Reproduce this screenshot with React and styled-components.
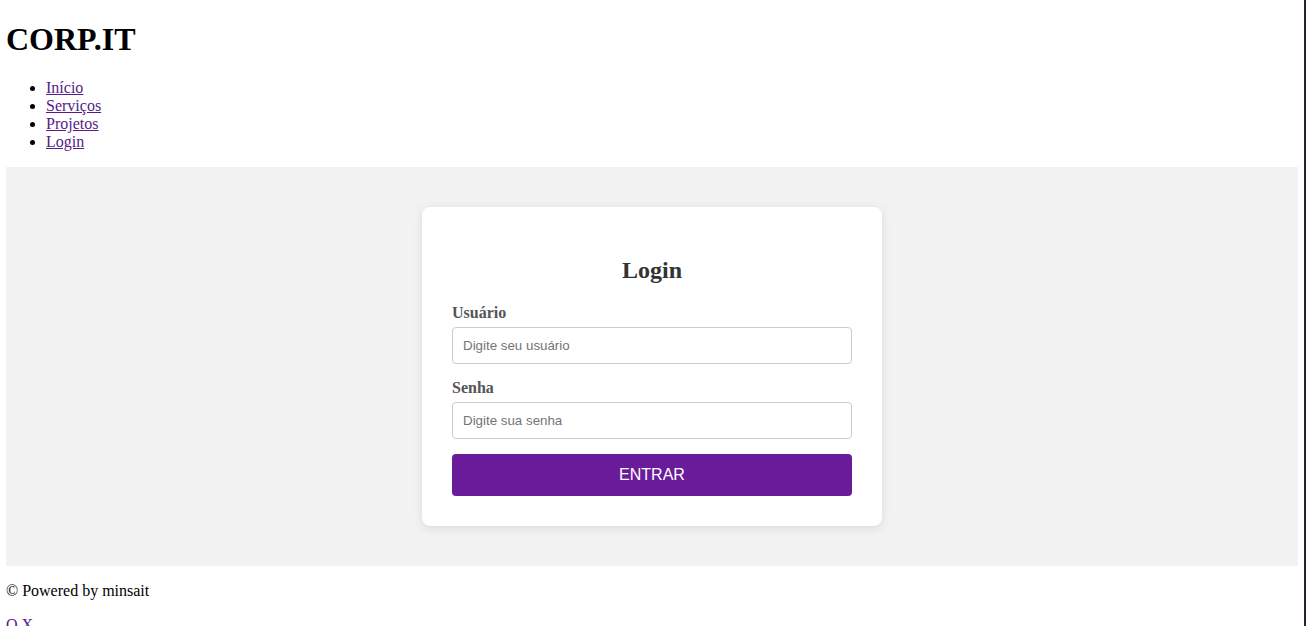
import React from 'react'
import styled, { createGlobalStyle } from 'styled-components'

const GlobalStyle = createGlobalStyle`
  html {
    border-right: 2px solid #1f2630;
    background: #fff;
  }
  body {
    margin: 0 6px 0 6px;
    font-family: "Liberation Serif", "Times New Roman", serif;
    font-size: 16px;
    color: #000;
  }
`

const Header = styled.header`
  h1 {
    font-size: 32px;
    margin: 20.5px 0 21.44px;
  }
`

const Nav = styled.ul`
  margin: 0 0 16px;
  padding-left: 40px;
  li {
    line-height: 18px;
  }
`

const Link = styled.a`
  color: #551a8b;
  text-decoration: underline;
  cursor: pointer;
`

const Main = styled.main`
  background: #f2f2f2;
  padding: 40px 0;
  display: flex;
  justify-content: center;
`

const Card = styled.form`
  width: 400px;
  padding: 30px;
  background: #fff;
  border-radius: 8px;
  box-shadow: 0 2px 10px rgba(0, 0, 0, 0.1);
  h2 {
    text-align: center;
    color: #333;
    font-size: 24px;
    margin: 20px 0;
  }
`

const Label = styled.label`
  display: block;
  font-weight: bold;
  color: #555;
  margin-bottom: 5px;
`

const Input = styled.input`
  display: block;
  box-sizing: border-box;
  width: 100%;
  height: 37px;
  padding: 0 10px;
  margin-bottom: ${p => (p.$last ? '0' : '15px')};
  border: 1px solid #ccc;
  border-radius: 4px;
  font-family: "Liberation Sans", Arial, sans-serif;
  font-size: 13.33px;
  &::placeholder {
    color: #757575;
  }
`

const Button = styled.button`
  display: block;
  width: 100%;
  height: 42px;
  margin-top: 15px;
  border: none;
  border-radius: 4px;
  background: #6a1b9a;
  color: #fff;
  font-family: "Liberation Sans", Arial, sans-serif;
  font-size: 16px;
  cursor: pointer;
`

const Footer = styled.footer`
  p {
    margin: 16px 0;
    line-height: 18px;
  }
`

export default function App() {
  return (
    <>
      <GlobalStyle />
      <Header>
        <h1>CORP.IT</h1>
        <Nav>
          <li><Link>Início</Link></li>
          <li><Link>Serviços</Link></li>
          <li><Link>Projetos</Link></li>
          <li><Link>Login</Link></li>
        </Nav>
      </Header>
      <Main>
        <Card onSubmit={e => e.preventDefault()}>
          <h2>Login</h2>
          <Label>Usuário</Label>
          <Input type="text" placeholder="Digite seu usuário" />
          <Label>Senha</Label>
          <Input type="password" placeholder="Digite sua senha" $last />
          <Button type="submit">ENTRAR</Button>
        </Card>
      </Main>
      <Footer>
        <p>© Powered by minsait</p>
        <p><Link>O</Link> <Link>X</Link></p>
      </Footer>
    </>
  )
}
